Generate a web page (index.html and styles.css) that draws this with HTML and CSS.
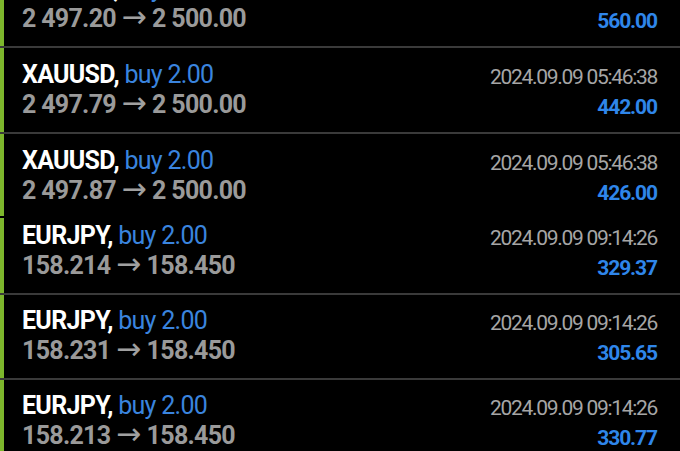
FILE: index.html
```html
<!DOCTYPE html>
<html lang="en">
<head>
    <meta charset="UTF-8">
    <meta name="viewport" content="width=device-width, initial-scale=1.0">
    <title>History</title>
    <link rel="stylesheet" href="styles.css">
</head>
<body>
    <div class="deals">
        <div class="deal">
            <div class="deal-info">
                <div class="deal-title">XAUUSD, <span class="deal-type">buy 2.00</span></div>
                <div class="deal-prices">2 497.20 <span class="arrow">&rarr;</span> 2 500.00</div>
            </div>
            <div class="deal-result">
                <div class="deal-time">2024.09.09 05:46:38</div>
                <div class="deal-profit">560.00</div>
            </div>
        </div>
        <div class="deal">
            <div class="deal-info">
                <div class="deal-title">XAUUSD, <span class="deal-type">buy 2.00</span></div>
                <div class="deal-prices">2 497.79 <span class="arrow">&rarr;</span> 2 500.00</div>
            </div>
            <div class="deal-result">
                <div class="deal-time">2024.09.09 05:46:38</div>
                <div class="deal-profit">442.00</div>
            </div>
        </div>
        <div class="deal deal-joined">
            <div class="deal-info">
                <div class="deal-title">XAUUSD, <span class="deal-type">buy 2.00</span></div>
                <div class="deal-prices">2 497.87 <span class="arrow">&rarr;</span> 2 500.00</div>
            </div>
            <div class="deal-result">
                <div class="deal-time">2024.09.09 05:46:38</div>
                <div class="deal-profit">426.00</div>
            </div>
        </div>
        <div class="deal deal-tight">
            <div class="deal-info">
                <div class="deal-title">EURJPY, <span class="deal-type">buy 2.00</span></div>
                <div class="deal-prices">158.214 <span class="arrow">&rarr;</span> 158.450</div>
            </div>
            <div class="deal-result">
                <div class="deal-time">2024.09.09 09:14:26</div>
                <div class="deal-profit">329.37</div>
            </div>
        </div>
        <div class="deal deal-lower">
            <div class="deal-info">
                <div class="deal-title">EURJPY, <span class="deal-type">buy 2.00</span></div>
                <div class="deal-prices">158.231 <span class="arrow">&rarr;</span> 158.450</div>
            </div>
            <div class="deal-result">
                <div class="deal-time">2024.09.09 09:14:26</div>
                <div class="deal-profit">305.65</div>
            </div>
        </div>
        <div class="deal deal-lower">
            <div class="deal-info">
                <div class="deal-title">EURJPY, <span class="deal-type">buy 2.00</span></div>
                <div class="deal-prices">158.213 <span class="arrow">&rarr;</span> 158.450</div>
            </div>
            <div class="deal-result">
                <div class="deal-time">2024.09.09 09:14:26</div>
                <div class="deal-profit">330.77</div>
            </div>
        </div>
    </div>
</body>
</html>
```

FILE: styles.css
```css
body {
    margin: 0;
    background-color: #000;
    font-family: Roboto, "Liberation Sans", sans-serif;
    overflow: hidden;
}
.deals {
    margin-top: -38px;
}
.deal {
    display: flex;
    align-items: flex-start;
    padding: 12px 23px 12px 22px;
    border-bottom: 2px solid #3a3a3a;
    box-shadow: inset 4px 0 0 #7db62c;
}
.deal-joined {
    padding-bottom: 10px;
    border-bottom-color: #000;
}
.deal-tight {
    padding-top: 3px;
}
.deal-lower {
    padding-top: 11px;
}
.deal-info {
    flex: 1;
}
.deal-result {
    margin: 2px 0 -2px;
    text-align: right;
}
.deal-title {
    font-size: 25px;
    line-height: 30px;
    font-weight: bold;
    letter-spacing: -0.7px;
    color: #fff;
}
.deal-type {
    font-weight: normal;
    color: #3a84de;
}
.deal-prices {
    font-size: 25px;
    line-height: 30px;
    font-weight: bold;
    letter-spacing: -0.7px;
    color: #9a9a9a;
}
.arrow {
    font-family: "DejaVu Sans", sans-serif;
    font-size: 30px;
    line-height: 0;
    font-weight: normal;
    letter-spacing: 0;
    color: #a0a0a0;
}
.deal-time {
    font-size: 21px;
    line-height: 30px;
    letter-spacing: -1.3px;
    color: #a6a6a6;
}
.deal-profit {
    font-size: 21px;
    line-height: 30px;
    font-weight: bold;
    letter-spacing: -1.1px;
    color: #2f86ea;
}
```
